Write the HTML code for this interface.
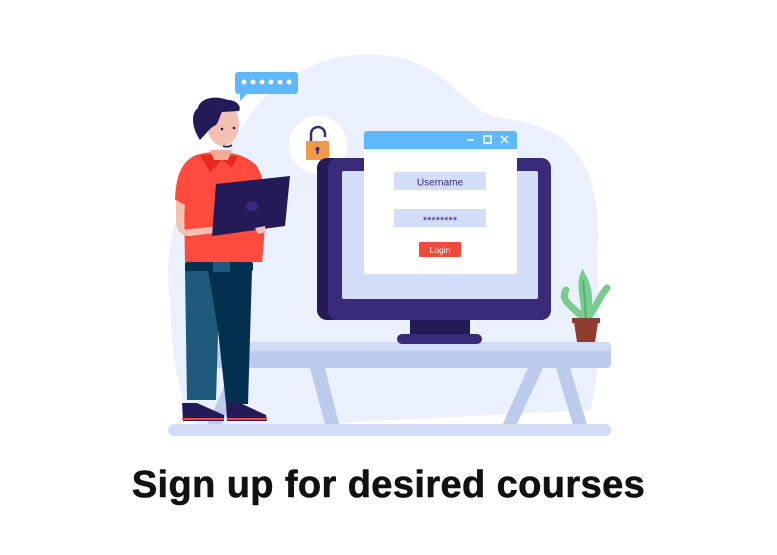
<!DOCTYPE html>
<html><head><meta charset="utf-8"><style>
html,body{margin:0;padding:0;background:#fff;width:777px;height:555px;overflow:hidden}
.t{position:absolute;left:0;width:777px;top:464px;text-align:center;font-family:"Liberation Sans",sans-serif;font-weight:bold;font-size:38px;color:#111;letter-spacing:0.4px;-webkit-text-stroke:0.6px #111}
</style></head><body>
<svg width="777" height="555" style="position:absolute;left:0;top:0" xmlns="http://www.w3.org/2000/svg">
<path d="M170 300 C160 230 190 170 240 130 C270 80 320 50 380 55 C450 60 460 110 500 118 C560 125 600 150 598 240 C596 300 605 360 590 410 L200 430 C175 400 172 350 170 300Z" fill="#eaf1fd"/>
<rect x="235" y="72" width="63" height="22" rx="3" fill="#5fb8fb"/>
<path d="M240 93 L240 101 L248 93Z" fill="#5fb8fb"/>
<g fill="#fff"><circle cx="244" cy="82" r="2.5"/><circle cx="253" cy="82" r="2.5"/><circle cx="262" cy="82" r="2.5"/><circle cx="271" cy="82" r="2.5"/><circle cx="280" cy="82" r="2.5"/><circle cx="289" cy="82" r="2.5"/></g>
<circle cx="318" cy="145" r="29" fill="#fff"/>
<path d="M311 141 V134 a7 7 0 0 1 14 0 V137" fill="none" stroke="#3a2a7a" stroke-width="2.5"/>
<rect x="306" y="141" width="23" height="19" rx="1" fill="#ef9a4a"/>
<circle cx="317.5" cy="149" r="2" fill="#3a2a7a"/><rect x="316.6" y="149" width="2" height="5" fill="#3a2a7a"/>
<path d="M232 368 L248 368 L220 428 L206 428Z" fill="#bccbec"/>
<path d="M310 368 L325 368 L340 428 L326 428Z" fill="#bccbec"/>
<path d="M528 368 L543 368 L515 428 L501 428Z" fill="#bccbec"/>
<path d="M556 368 L570 368 L588 428 L574 428Z" fill="#bccbec"/>
<rect x="212" y="342" width="399" height="26" rx="4" fill="#bccbec"/>
<rect x="212" y="342" width="399" height="9" rx="4" fill="#d0dbf5"/>
<rect x="168" y="424" width="443" height="12" rx="6" fill="#d3ddf7"/>
<rect x="317" y="158" width="234" height="162" rx="10" fill="#231a57"/>
<rect x="328" y="158" width="223" height="162" rx="10" fill="#3a2a7a"/>
<rect x="342" y="171" width="196" height="128" rx="2" fill="#d3ddf7"/>
<rect x="410" y="320" width="60" height="16" fill="#231a57"/>
<rect x="397" y="334" width="85" height="10" rx="5" fill="#3a2a7a"/>
<rect x="364" y="131" width="153" height="143" rx="3" fill="#fff"/>
<path d="M364 149 V134 a3 3 0 0 1 3 -3 H514 a3 3 0 0 1 3 3 V149Z" fill="#5fb8fb"/>
<g stroke="#fff" stroke-width="1.5" fill="none"><line x1="467" y1="140" x2="474" y2="140"/><rect x="484" y="136" width="7" height="7"/><path d="M501 136 L508 143 M508 136 L501 143"/></g>
<rect x="394" y="172" width="92" height="18" rx="1.5" fill="#d3ddf7"/>
<rect x="394" y="209" width="92" height="18" rx="1.5" fill="#d3ddf7"/>
<rect x="419" y="242" width="42" height="15" rx="1" fill="#f04a3c"/>
<text x="440" y="185.5" text-anchor="middle" font-family="Liberation Sans,sans-serif" font-size="10" fill="#3a2a7a">Username</text>
<text x="440" y="224" text-anchor="middle" font-family="Liberation Sans,sans-serif" font-size="11" fill="#3a2a7a">********</text>
<text x="440" y="253" text-anchor="middle" font-family="Liberation Sans,sans-serif" font-size="8.5" fill="#fff">Login</text>
<path d="M586 320 C570 305 560 300 566 290 M586 320 C584 300 580 285 583 277 C590 290 590 305 586 320 M586 320 C598 305 600 295 607 288" stroke="#79cc8f" stroke-width="7" fill="none" stroke-linecap="round"/>
<path d="M583 280 C585 295 585 310 586 320" stroke="#5ab070" stroke-width="2" fill="none"/>
<rect x="572" y="318" width="28" height="5" fill="#913a30"/>
<path d="M574 322 H598 L595 342 H577Z" fill="#913a30"/>
<path d="M185 270 L220 270 L216 400 L187 400Z" fill="#1e5a7c"/>
<path d="M208 270 L252 270 L248 404 L226 404 L218 330Z" fill="#03304f"/>
<rect x="185" y="262" width="68" height="9" rx="2" fill="#03304f"/>
<rect x="213" y="261" width="17" height="11" fill="#1e5a7c"/>
<path d="M182 403 L197 403 L224 415 L224 421 L183 421Z" fill="#231a57"/>
<path d="M226 403 L240 403 L266 415 L267 421 L227 421Z" fill="#231a57"/>
<path d="M182 419 H224 M227 419 H267" stroke="#f04a3c" stroke-width="2"/>
<path d="M196 155 C215 150 240 150 256 165 C266 180 268 200 262 262 H185 L184 205 L175 200 C176 170 185 160 196 155Z" fill="#ff4b3e"/>
<path d="M200 155 L210 172 L222 160 L232 168 L238 156 Z" fill="#e8281f"/>
<path d="M210 150 L214 160 L228 160 L232 150Z" fill="#f3ab98"/>
<path d="M176 200 L185 205 L183 230 L220 226 L222 232 L190 236 C180 236 176 230 176 220Z" fill="#f3c2b3"/>
<path d="M216 184 L290 176 L285 226 L212 236Z" fill="#231a57"/>
<ellipse cx="252" cy="206" rx="6" ry="5" fill="#3a2a7a"/>
<path d="M255 228 L265 226 L266 232 L258 234Z" fill="#f3c2b3"/>
<ellipse cx="223" cy="124" rx="16" ry="22" fill="#f3c2b3"/>
<path d="M200 140 C190 125 192 112 198 108 C200 98 215 95 228 100 C236 100 242 106 239 111 L222 112 C219 118 218 125 214 126 C210 128 205 135 200 140Z" fill="#231a57"/>
<circle cx="222" cy="129" r="1.3" fill="#231a57"/><circle cx="234" cy="128" r="1.3" fill="#231a57"/>
<path d="M223 146 Q228 148 232 145" stroke="#231a57" stroke-width="1.5" fill="none"/>
</svg>
<div class="t">Sign up for desired courses</div>
</body></html>
